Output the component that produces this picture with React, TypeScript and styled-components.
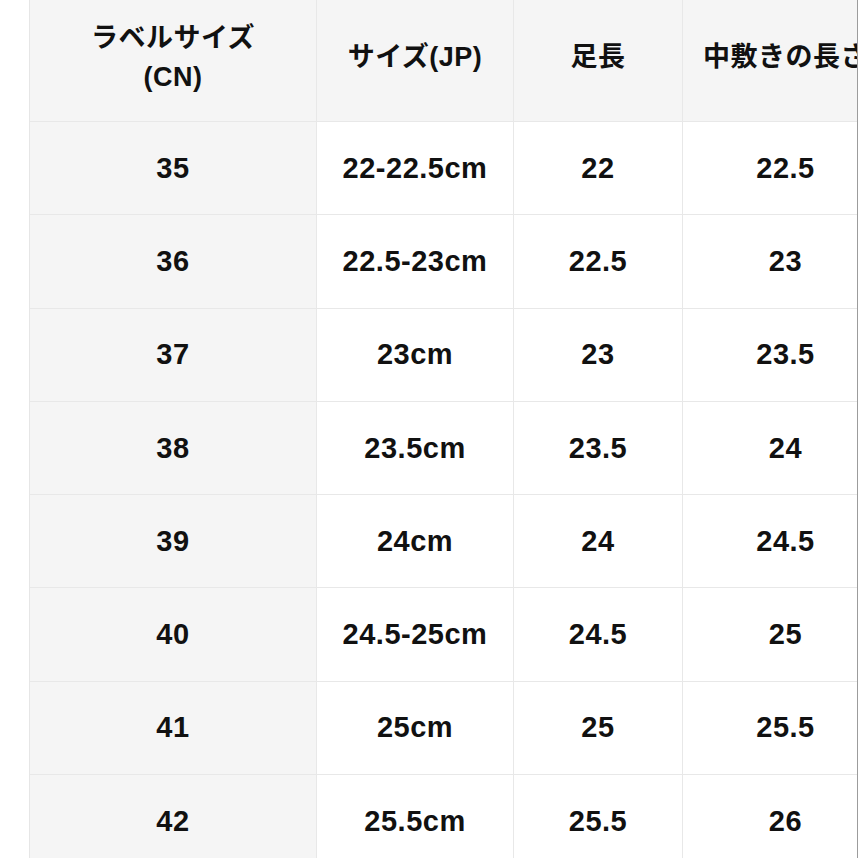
import * as React from 'react'
import styled, { createGlobalStyle } from 'styled-components'

const GlobalStyle = createGlobalStyle`
  html, body {
    margin: 0;
    padding: 0;
    background: #ffffff;
  }
  * {
    box-sizing: border-box;
  }
`

const Frame = styled.div`
  width: 858px;
  height: 858px;
  overflow: hidden;
  background: #ffffff;
  padding-left: 29px;
  border-right: 1px solid #9c9c9c;
  font-family: "Liberation Sans", "Noto Sans CJK JP", sans-serif;
  color: #111111;
`

const Table = styled.div`
  display: grid;
  grid-template-columns: 287px 197px 169px 206px;
  grid-template-rows: 122px;
  grid-auto-rows: 93.3px;
  width: max-content;
  border-left: 1px solid #e6e6e6;
`

const Cell = styled.div<{ $shade?: boolean; $head?: boolean }>`
  display: flex;
  align-items: center;
  justify-content: center;
  text-align: center;
  white-space: nowrap;
  background: ${p => (p.$shade ? '#f5f5f5' : '#ffffff')};
  border-right: 1px solid #e8e8e8;
  border-bottom: 1px solid #e8e8e8;
  font-size: ${p => (p.$head ? '27px' : '29px')};
  font-weight: 700;
  line-height: ${p => (p.$head ? '39px' : '1')};
  letter-spacing: 0.5px;
  padding-bottom: ${p => (p.$head ? '6px' : '0')};
`

const headers = ['ラベルサイズ\n(CN)', 'サイズ(JP)', '足長', '中敷きの長さ']

const rows: string[][] = [
  ['35', '22-22.5cm', '22', '22.5'],
  ['36', '22.5-23cm', '22.5', '23'],
  ['37', '23cm', '23', '23.5'],
  ['38', '23.5cm', '23.5', '24'],
  ['39', '24cm', '24', '24.5'],
  ['40', '24.5-25cm', '24.5', '25'],
  ['41', '25cm', '25', '25.5'],
  ['42', '25.5cm', '25.5', '26'],
]

const HeadText = styled.span`
  white-space: pre-line;
`

export default function App() {
  return (
    <>
      <GlobalStyle />
      <Frame>
        <Table>
          {headers.map(h => (
            <Cell key={h} $shade $head>
              <HeadText>{h}</HeadText>
            </Cell>
          ))}
          {rows.map(r =>
            r.map((v, i) => (
              <Cell key={r[0] + '-' + i} $shade={i === 0}>
                {v}
              </Cell>
            ))
          )}
        </Table>
      </Frame>
    </>
  )
}
